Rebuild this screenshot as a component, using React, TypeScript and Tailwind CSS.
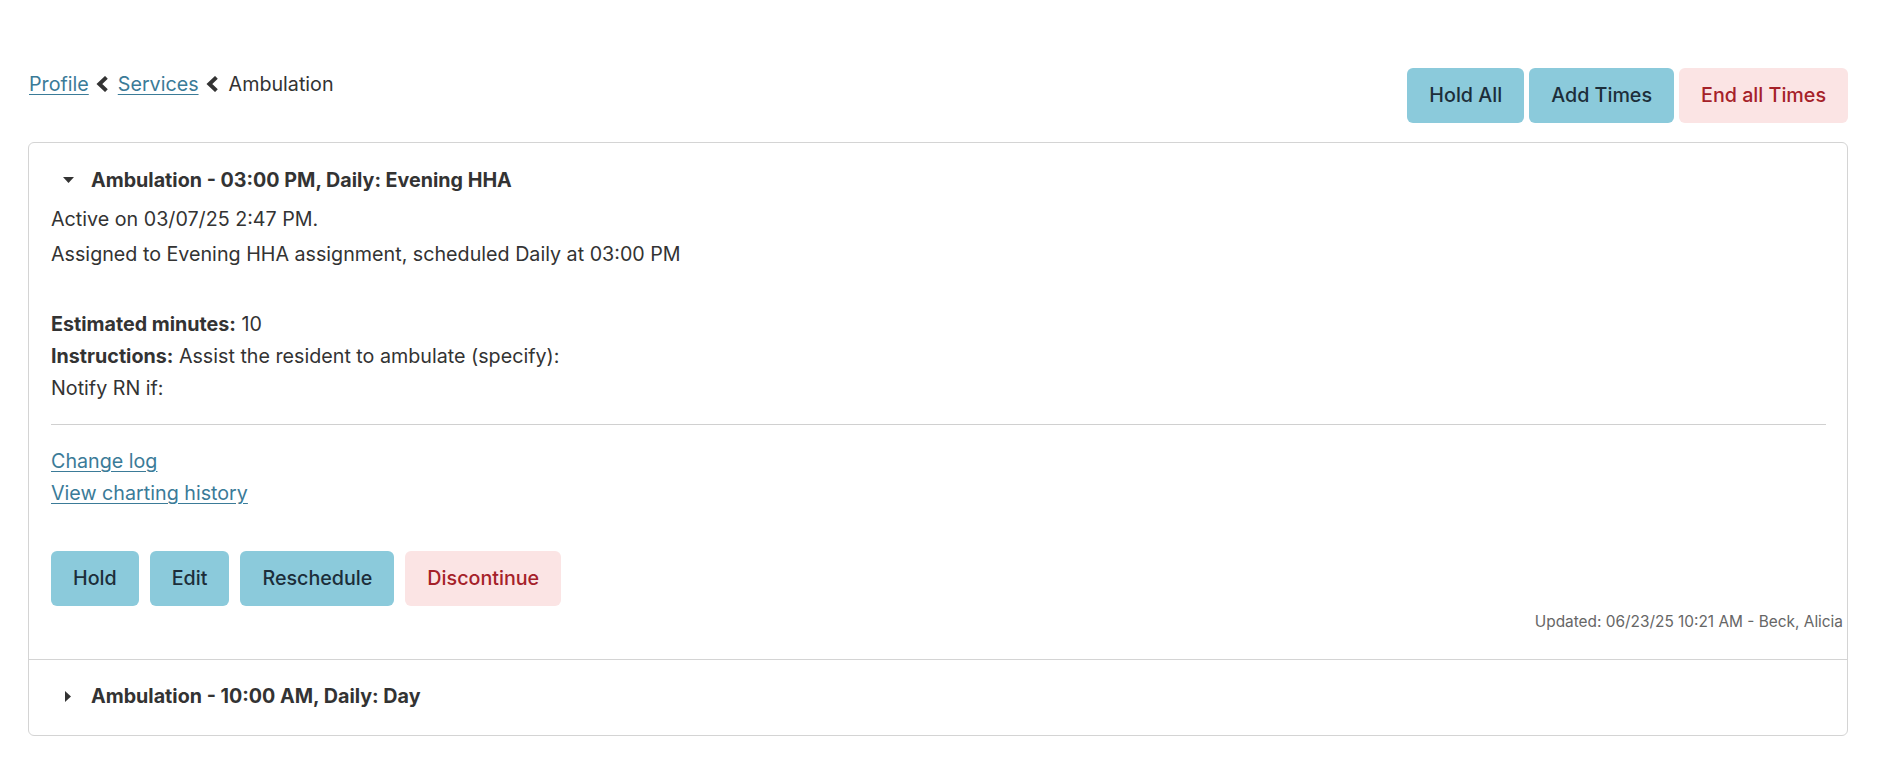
import type { ReactNode } from "react";

const font = "font-['Inter','Liberation_Sans',sans-serif]";

function Chevron() {
	return (
		<svg width="13" height="16" viewBox="0 0 13 16" className="shrink-0">
			<path d="M10.4 1.4 L3.4 8 L10.4 14.6" fill="none" stroke="#333" strokeWidth="4" />
		</svg>
	);
}

function CaretDown() {
	return (
		<svg width="11" height="6" viewBox="0 0 11 6">
			<path d="M0 0 H11 L5.5 6 Z" fill="#333" />
		</svg>
	);
}

function CaretRight() {
	return (
		<svg width="6" height="11" viewBox="0 0 6 11">
			<path d="M0 0 L6 5.5 L0 11 Z" fill="#333" />
		</svg>
	);
}

function Btn({ children, danger }: { children: ReactNode; danger?: boolean }) {
	return (
		<button
			className={
				danger
					? "h-[55px] px-[22px] rounded-[6px] bg-[#fbe4e4] text-[#a52129] font-medium"
					: "h-[55px] px-[22px] rounded-[6px] bg-[#8bcadb] text-[#1c2e3a] font-medium"
			}
		>
			{children}
		</button>
	);
}

function ItemHeader({ open, title }: { open?: boolean; title: string }) {
	return (
		<div className="flex items-center ml-[11px] leading-[32px]">
			<span className="w-[12px] flex justify-center">{open ? <CaretDown /> : <CaretRight />}</span>
			<span className="ml-[17px] font-bold">{title}</span>
		</div>
	);
}

export default function App() {
	return (
		<div className={`${font} min-h-screen bg-white pt-[68px] pl-[28px] pr-[32px] text-[19.7px] text-[#333]`}>
			<div className="flex items-start justify-between">
				<nav className="flex items-center leading-[32px] pl-[1px]">
					<a href="#" className="text-[#3b7b98] underline underline-offset-[3px]">Profile</a>
					<span className="ml-[7px] mr-[9px]"><Chevron /></span>
					<a href="#" className="text-[#3b7b98] underline underline-offset-[3px]">Services</a>
					<span className="ml-[7px] mr-[10px]"><Chevron /></span>
					<span>Ambulation</span>
				</nav>
				<div className="flex gap-[5px]">
					<Btn>Hold All</Btn>
					<Btn>Add Times</Btn>
					<Btn danger>End all Times</Btn>
				</div>
			</div>

			<div className="mt-[19px] border border-[#d4d4d4] rounded-[6px]">
				<section className="pt-[21px] pb-[27px] pl-[22px] pr-[4px]">
					<div className="pr-[17px]">
						<ItemHeader open title="Ambulation - 03:00 PM, Daily: Evening HHA" />
						<p className="mt-[7px] leading-[32px]">Active on 03/07/25 2:47 PM.</p>
						<p className="mt-[3px] leading-[32px]">Assigned to Evening HHA assignment, scheduled Daily at 03:00 PM</p>
						<div className="mt-[38px] leading-[32px]">
							<div><span className="font-bold">Estimated minutes:</span> 10</div>
							<div><span className="font-bold">Instructions:</span> Assist the resident to ambulate (specify):</div>
							<div>Notify RN if:</div>
						</div>
						<hr className="mt-[20px] border-0 border-t border-[#d0d0d0]" />
						<div className="mt-[20px] leading-[32px] flex flex-col items-start">
							<a href="#" className="text-[#3b7b98] underline underline-offset-[3px]">Change log</a>
							<a href="#" className="text-[#3b7b98] underline underline-offset-[3px]">View charting history</a>
						</div>
						<div className="mt-[42px] flex gap-[11px]">
							<Btn>Hold</Btn>
							<Btn>Edit</Btn>
							<Btn>Reschedule</Btn>
							<Btn danger>Discontinue</Btn>
						</div>
					</div>
					<div className="mt-[6px] text-right text-[15.4px] leading-[20px] text-[#666]">
						Updated: 06/23/25 10:21 AM - Beck, Alicia
					</div>
				</section>
				<section className="border-t border-[#d4d4d4] pt-[20px] pb-[23px] pl-[22px]">
					<ItemHeader title="Ambulation - 10:00 AM, Daily: Day" />
				</section>
			</div>
		</div>
	);
}
